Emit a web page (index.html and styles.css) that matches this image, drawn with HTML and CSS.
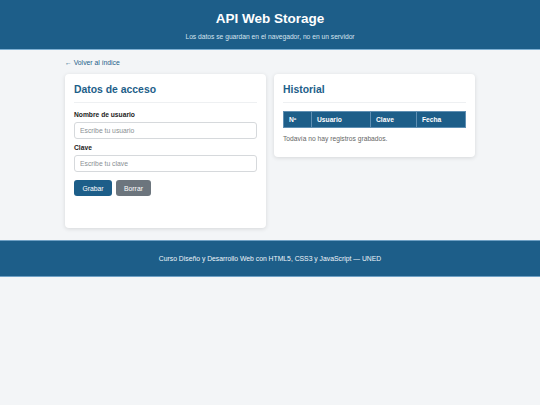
FILE: index.html
```html
<!DOCTYPE html>
<html lang="es">
<head>
<meta charset="utf-8">
<title>API Web Storage</title>
<link rel="stylesheet" href="styles.css">
</head>
<body>
<header class="site-header">
  <h1 class="site-title">API Web Storage</h1>
  <p class="site-subtitle">Los datos se guardan en el navegador, no en un servidor</p>
</header>
<main class="main">
  <a class="back-link" href="#">← Volver al índice</a>
  <div class="grid">
    <section class="card">
      <h2 class="card-title">Datos de acceso</h2>
      <form class="form">
        <label class="label" for="u">Nombre de usuario</label>
        <input class="input" id="u" type="text" placeholder="Escribe tu usuario">
        <label class="label" for="c">Clave</label>
        <input class="input" id="c" type="password" placeholder="Escribe tu clave">
        <div class="actions">
          <button type="button" class="btn btn-primary">Grabar</button>
          <button type="button" class="btn btn-secondary">Borrar</button>
        </div>
      </form>
    </section>
    <section class="card">
      <h2 class="card-title">Historial</h2>
      <table class="table">
        <thead>
          <tr><th class="c1">Nº</th><th class="c2">Usuario</th><th class="c3">Clave</th><th class="c4">Fecha</th></tr>
        </thead>
      </table>
      <p class="empty">Todavía no hay registros grabados.</p>
    </section>
  </div>
</main>
<footer class="site-footer">
  <p class="footer-text">Curso Diseño y Desarrollo Web con HTML5, CSS3 y JavaScript — UNED</p>
</footer>
</body>
</html>
```

FILE: styles.css
```css
* { box-sizing: border-box; }
html, body { margin: 0; padding: 0; }
body {
  background: #f3f5f7;
  font-family: "Liberation Sans", Arial, sans-serif;
  color: #333;
}
.site-header {
  background: #1d5e89;
  border-bottom: 1px solid #7fb0d3;
  text-align: center;
  padding: 10px 0 8px;
  color: #fff;
}
.site-title {
  margin: 0 0 4px;
  font-size: 13.5px;
  line-height: 18px;
  font-weight: bold;
}
.site-subtitle {
  margin: 0;
  font-size: 6.7px;
  line-height: 9px;
  color: #d6e4ef;
}
.main {
  width: 410px;
  margin: 0 auto;
  padding: 8px 0 12px;
}
.back-link {
  display: block;
  font-size: 6.8px;
  line-height: 9px;
  color: #1d5e89;
  text-decoration: none;
  margin-bottom: 7px;
}
.grid {
  display: grid;
  grid-template-columns: 1fr 1fr;
  gap: 8px;
  align-items: start;
}
.card {
  background: #fff;
  border-radius: 4px;
  box-shadow: 0 1px 4px rgba(0,0,0,0.12);
  padding: 9px 9px 14px;
}
.card-title {
  margin: 0 0 8px;
  font-size: 10.4px;
  line-height: 14px;
  font-weight: bold;
  color: #1d5e89;
  padding-bottom: 5px;
  border-bottom: 1px solid #eef0f2;
}
.form { display: flex; flex-direction: column; margin-bottom: 18px; }
.label {
  font-size: 6.7px;
  line-height: 8px;
  font-weight: bold;
  color: #222;
  margin-bottom: 3px;
}
.input {
  height: 17px;
  border: 1px solid #d6d9dc;
  border-radius: 3px;
  padding: 0 5px;
  font-family: inherit;
  font-size: 6.8px;
  margin: 0 0 5px;
  color: #333;
}
.input::placeholder { color: #8a8f94; }
.actions { display: flex; gap: 4px; margin-top: 3px; }
.btn {
  height: 16px;
  border: none;
  border-radius: 3px;
  color: #fff;
  font-family: inherit;
  font-size: 6.8px;
  padding: 0;
}
.btn-primary { background: #1d5e89; width: 38px; }
.btn-secondary { background: #6c757d; width: 35px; }
.table {
  border-collapse: collapse;
  width: 100%;
  table-layout: fixed;
}
.table th {
  background: #1d5e89;
  color: #fff;
  text-align: left;
  font-size: 6.7px;
  font-weight: bold;
  height: 16px;
  padding: 0 5px;
  border: 1px solid #5f8fb3;
}
.c1 { width: 28px; }
.c2 { width: 59px; }
.c3 { width: 46px; }
.empty {
  margin: 6px 0 0;
  font-size: 6.7px;
  line-height: 9px;
  color: #666;
}
.site-footer {
  background: #1d5e89;
  border-top: 1px solid #6fa0c4;
  border-bottom: 1px solid #6fa0c4;
  padding: 13px 0;
  text-align: center;
}
.footer-text {
  margin: 0;
  color: #f0f5f9;
  font-size: 6.8px;
  line-height: 9px;
}
```
